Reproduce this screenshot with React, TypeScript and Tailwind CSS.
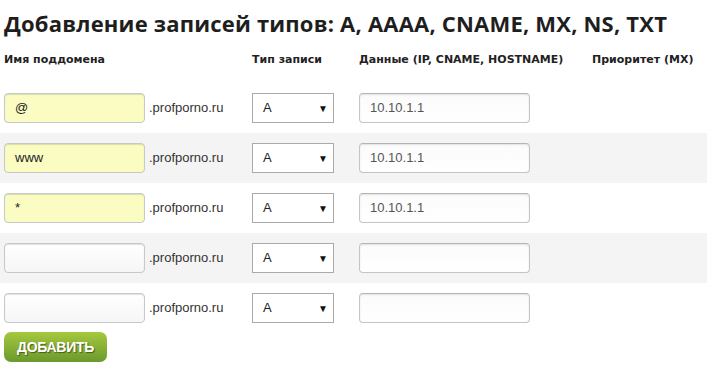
import React from 'react';

interface RecordRow {
    sub: string;
    type: string;
    data: string;
    filled: boolean;
}

const rows: RecordRow[] = [
    { sub: '@', type: 'A', data: '10.10.1.1', filled: true },
    { sub: 'www', type: 'A', data: '10.10.1.1', filled: true },
    { sub: '*', type: 'A', data: '10.10.1.1', filled: true },
    { sub: '', type: 'A', data: '', filled: false },
    { sub: '', type: 'A', data: '', filled: false },
];

const Row: React.FC<{ row: RecordRow; odd: boolean }> = ({ row, odd }) => (
    <div className={`flex items-start h-[50px] pt-[10px] ${odd ? 'bg-[#f4f4f4]' : 'bg-white'}`}>
        <div className="w-[252px] flex items-start pl-[4px]">
            <div
                className={`w-[141px] h-[30px] rounded-[4px] border border-[#c8c8c8] flex items-center pl-[10px] text-[13px] text-[#222] shadow-[inset_0_1px_1px_rgba(0,0,0,0.12)] ${
                    row.filled ? 'bg-[#fafcc2]' : 'bg-gradient-to-b from-white to-[#f6f6f6]'
                }`}
            >
                {row.sub}
            </div>
            <span className="ml-[4px] mt-[5px] text-[13px] text-[#333]">.profporno.ru</span>
        </div>
        <div className="w-[107px]">
            <div className="w-[82px] h-[30px] border border-[#a9a9a9] bg-white flex items-center justify-between pl-[10px] pr-[5px] text-[13px] text-[#222]">
                <span>{row.type}</span>
                <span className="text-[10px] text-[#111]">▼</span>
            </div>
        </div>
        <div className="w-[233px]">
            <div className="w-[171px] h-[30px] rounded-[4px] border border-[#c4c4c4] border-t-[#b4b4b4] bg-gradient-to-b from-[#fbfbfb] to-white shadow-[inset_0_1px_2px_rgba(0,0,0,0.1)] flex items-center pl-[10px] text-[13px] text-[#555]">
                {row.data}
            </div>
        </div>
    </div>
);

const App: React.FC = () => {
    return (
        <div className="w-[707px] h-[369px] bg-white overflow-hidden font-['Liberation_Sans',Arial,sans-serif]">
            {/* Title */}
            <h1 className="pl-[4px] pt-[9px] h-[46px] whitespace-nowrap text-[22px] leading-[28px] font-bold tracking-[0.2px] text-[#1e1e1e] font-['Open_Sans',sans-serif]">
                Добавление записей типов: A, AAAA, CNAME, MX, NS, TXT
            </h1>

            {/* Column headers */}
            <div className="flex h-[28px] items-center text-[11px] font-bold text-[#222] font-['DejaVu_Sans',sans-serif]">
                <div className="w-[252px] pl-[4px]">Имя поддомена</div>
                <div className="w-[107px]">Тип записи</div>
                <div className="w-[233px]">Данные (IP, CNAME, HOSTNAME)</div>
                <div>Приоритет (MX)</div>
            </div>

            <div className="h-[9px]" />

            {rows.map((row, i) => (
                <Row key={i} row={row} odd={i % 2 === 1} />
            ))}

            <div className="pl-[4px] -mt-[1px]">
                <button className="w-[103px] h-[30px] rounded-[7px] bg-gradient-to-b from-[#a6c83e] to-[#6a9a2c] text-white text-[14px] font-bold tracking-[-0.3px] [text-shadow:1px_1px_1px_rgba(0,0,0,0.45)] flex items-center justify-center">
                    ДОБАВИТЬ
                </button>
            </div>
        </div>
    );
};

export default App;
